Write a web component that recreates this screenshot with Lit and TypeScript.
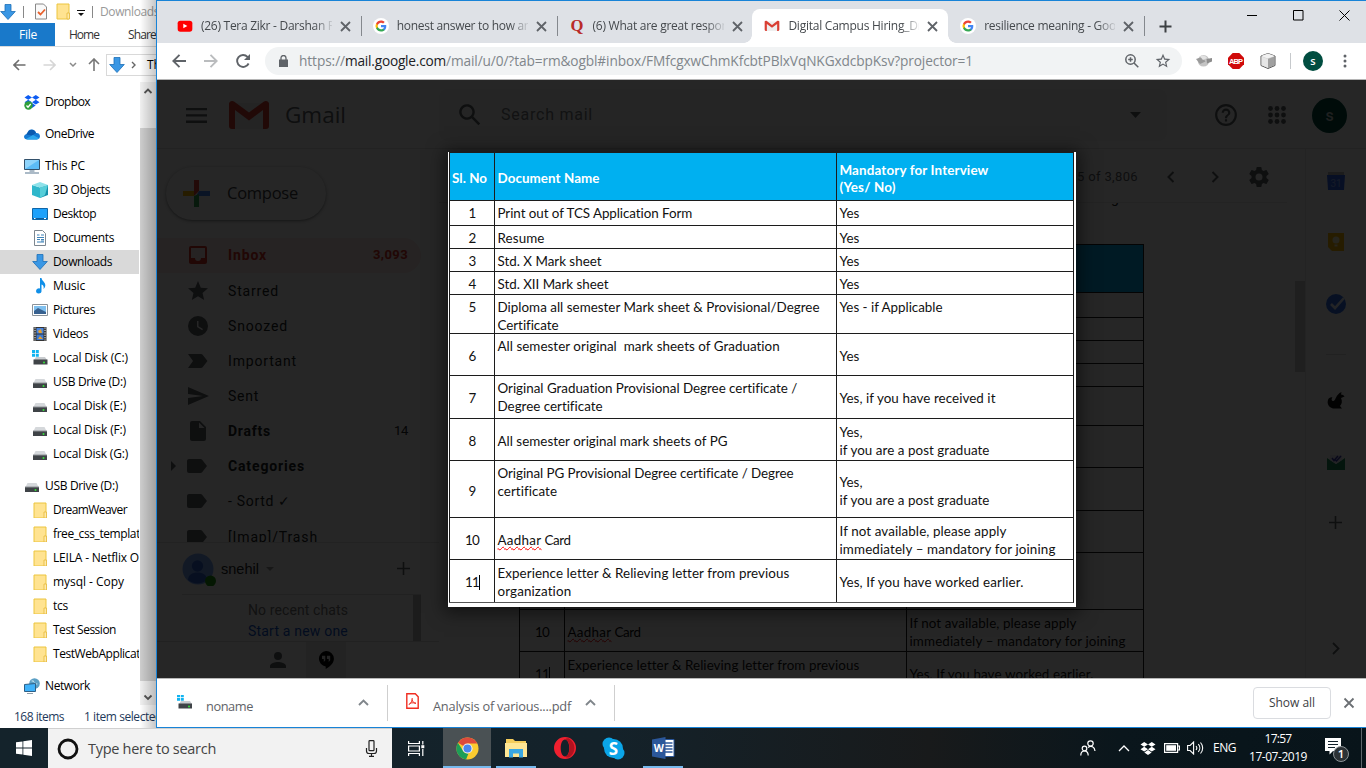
import { LitElement, html, svg, css, nothing } from "lit";
import { customElement, property, query } from "lit/decorators.js";

/** A run of text whose tracking is computed so that it fills a given width. */
@customElement("fit-text")
class FitText extends LitElement {
  @property({ type: Number }) w = 0;
  @property() text = "";
  @query("span") span!: HTMLSpanElement;
  static styles = css`
    :host { display: inline-block; white-space: pre; flex: none; }
    :host([wavy]) span { text-decoration: underline wavy #f00 1px; text-underline-offset: 1px; text-decoration-skip-ink: none; }
  `;
  render() {
    return html`<span>${this.text}</span>`;
  }
  firstUpdated() {
    const natural = this.span.getBoundingClientRect().width;
    this.span.style.letterSpacing = (this.w - natural) / this.text.length + "px";
    this.style.width = this.w + "px";
  }
}

const t = (text: string, w: number) => html`<fit-text .text=${text} .w=${w}></fit-text>`;

/** [first-line centre measured from the row top, lines as [text, width]] */
type Cell = [number, [string, number][]];
type Row = { h: number; cells: [Cell, Cell, Cell] };

const ROWS: Row[] = [
  { h: 48, cells: [[26, [["Sl. No", 35]]], [26, [["Document Name", 102]]], [17.5, [["Mandatory for Interview", 149], ["(Yes/ No)", 56]]]] },
  { h: 25, cells: [[13, [["1", 7]]], [13, [["Print out of TCS Application Form", 195]]], [13, [["Yes", 20]]]] },
  { h: 23, cells: [[12.5, [["2", 7]]], [12.5, [["Resume", 47]]], [12.5, [["Yes", 20]]]] },
  { h: 23, cells: [[12.5, [["3", 7]]], [12.5, [["Std. X Mark sheet", 104]]], [12.5, [["Yes", 20]]]] },
  { h: 23, cells: [[12.5, [["4", 7]]], [12.5, [["Std. XII Mark sheet", 111]]], [12.5, [["Yes", 20]]]] },
  { h: 39, cells: [[13, [["5", 7]]], [13, [["Diploma all semester Mark sheet & Provisional/Degree", 322], ["Certificate", 61]]], [13, [["Yes - if Applicable", 103]]]] },
  { h: 42, cells: [[23, [["6", 7]]], [13, [["All semester original  mark sheets of Graduation", 282.5]]], [23, [["Yes", 20]]]] },
  { h: 43, cells: [[23, [["7", 7]]], [13, [["Original Graduation Provisional Degree certificate /", 300], ["Degree certificate", 105]]], [23, [["Yes, if you have received it", 156]]]] },
  { h: 42, cells: [[23, [["8", 7]]], [23, [["All semester original mark sheets of PG", 230]]], [14, [["Yes,", 23], ["if you are a post graduate", 150]]]] },
  { h: 57, cells: [[30.5, [["9", 7]]], [13, [["Original PG Provisional Degree certificate / Degree", 296], ["certificate", 59.5]]], [22, [["Yes,", 23], ["if you are a post graduate", 150]]]] },
  { h: 42, cells: [[23, [["10", 14]]], [23, [["Aadhar Card", 73]]], [14, [["If not available, please apply", 167], ["immediately – mandatory for joining", 216]]]] },
  { h: 43, cells: [[22.5, [["11", 14]]], [14, [["Experience letter & Relieving letter from previous", 291], ["organization", 74]]], [22.5, [["Yes, If you have worked earlier.", 184]]]] },
];

@customElement("doc-table")
class DocTable extends LitElement {
  static styles = css`
    :host { display: block; width: 628px; height: 455px; background: #fff; color: #111; font: 13.4px/17.7px Lato, sans-serif; box-sizing: border-box; padding-left: 1px; }
    .row { display: grid; grid-template-columns: 45px 342px 237px; width: 625px; border-top: 1px solid #1c1c1c; border-right: 1px solid #1c1c1c; box-sizing: border-box; }
    .row:last-child { border-bottom: 1px solid #555; }
    .cell { border-left: 1px solid #1c1c1c; padding-left: 2.500px; box-sizing: border-box; }
    .cell:first-child { padding-left: 0; text-align: center; }
    .head { background: #00b0f0; color: #fff; font-weight: 700; }
    .head .cell:first-child { padding-right: 5px; }
    .line { display: block; white-space: nowrap; height: 17.700px; }
    .caret { display: inline-block; width: 1px; height: 15px; background: #000; vertical-align: -3px; margin-right: -1px; }
  `;
  private line([text, w]: [string, number]) {
    if (text === "Aadhar Card")
      return html`<span class="line"><fit-text wavy .text=${"Aadhar"} .w=${44}></fit-text>${t(" Card", 29)}</span>`;
    return html`<span class="line">${t(text, w)}${text === "11" ? html`<i class="caret"></i>` : nothing}</span>`;
  }
  render() {
    return ROWS.map(
      (r, i) => html`<div class="row ${i ? "" : "head"}" style="height:${i === 11 ? r.h + 1 : r.h}px">
        ${r.cells.map(([c, lines]) => html`<div class="cell" style="padding-top:${c - 9}px">${lines.map((l) => this.line(l))}</div>`)}
      </div>`
    );
  }
}

/* ---------- icons ---------- */
const icon = (w: number, h: number, vb: string, body: unknown, cls = "") =>
  html`<svg class="ic ${cls}" width=${w} height=${h} viewBox=${vb}>${body}</svg>`;

const arrowDown = svg`<path d="M5 0.5h6v7h4.3L8 15.5.7 7.500H5z" fill="#3a97e4" stroke="#1c6fb8" stroke-width=".8"/>`;
const folder = svg`<path d="M2 1h12v15H2z" fill="#ffe391" stroke="#ecc53f" stroke-width="1"/><path d="M12 10h2.500v6H12z" fill="#ffe9a8" stroke="#e6b93a" stroke-width=".8"/>`;
const drive = svg`<path d="M3.500 5h9l2 4h-13z" fill="#d5d8db"/><path d="M1 9h14v5H1z" fill="#3f4347"/><path d="M1 8.500h14v1H1z" fill="#8e9296"/><circle cx="11.500" cy="12" r="1" fill="#35e23a"/>`;
const winDrive = svg`<path d="M0 0h3v3H0zM3.800 0h3v3h-3zM0 3.800h3v3H0zM3.800 3.800h3v3h-3z" fill="#11b4f1"/><path d="M4 7h9l2 3H2z" fill="#c9cccf"/><path d="M1.500 9.500h14v5h-14z" fill="#3f4347"/><circle cx="12" cy="12.500" r="1" fill="#35e23a"/>`;
const dbx = (c: string) => svg`<path fill=${c} d="M4.200 1 .5 3.400l3.700 2.400L8 3.400zM11.800 1 8 3.400l3.800 2.400 3.700-2.400zM.5 8.200l3.700 2.400L8 8.200 4.200 5.800zM11.800 5.800 8 8.200l3.800 2.400 3.700-2.400zM4.300 11.500 8 13.900l3.700-2.400L8 9.100z"/>`;
const gees = svg`<circle cx="12" cy="12" r="12" fill="#fff"/><g transform="translate(3 3) scale(.75)"><path fill="#4285F4" d="M22.560 12.250c0-.78-.07-1.530-.2-2.250H12v4.260h5.920a5.060 5.060 0 0 1-2.200 3.320v2.770h3.570c2.080-1.920 3.270-4.740 3.270-8.100z"/><path fill="#34A853" d="M12 23c2.970 0 5.460-.98 7.280-2.660l-3.570-2.770c-.98.66-2.230 1.060-3.710 1.060-2.860 0-5.290-1.930-6.160-4.530H2.180v2.840A11 11 0 0 0 12 23z"/><path fill="#FBBC05" d="M5.840 14.090a6.600 6.600 0 0 1 0-4.180V7.070H2.180a11 11 0 0 0 0 9.860z"/><path fill="#EA4335" d="M12 5.380c1.620 0 3.060.56 4.210 1.640l3.150-3.150C17.450 2.090 14.970 1 12 1A11 11 0 0 0 2.180 7.070l3.660 2.840C6.710 7.310 9.140 5.380 12 5.380z"/></g>`;
const gmailM = svg`<path d="M3 2h34v26H3z" fill="#eee"/><path d="M0 4.500V25a3 3 0 0 0 3 3h3V9l14 10.500L34 9v19h3a3 3 0 0 0 3-3V4.500A3.500 3.500 0 0 0 36.500 0L35 .5 20 11.500 5 .5 3.500 0A3.500 3.500 0 0 0 0 4.500z" fill="#d93f33"/>`;
const cross = (c: string, s = 1.8) => svg`<path d="M1.500 1.500l9 9M10.500 1.500l-9 9" stroke=${c} stroke-width=${s} fill="none"/>`;

const NAV: ({ n: string; w: number; i: unknown; top?: boolean; gap?: boolean; sel?: boolean })[] = [
  { n: "Dropbox", w: 45, top: true, i: svg`${dbx("#0d5cf2")}<circle cx="4.500" cy="11.500" r="4.200" fill="#2f9e3b"/><path d="M2.500 11.500l1.500 1.700 2.700-3.200" stroke="#fff" stroke-width="1.300" fill="none"/>` },
  { n: "OneDrive", w: 49, top: true, gap: true, i: svg`<path d="M3.500 8a4 4 0 0 1 4-4.500c2.500 0 4 1.500 4.500 3.500 2.300-.2 4 1 4 3.300 0 2-1.400 3.200-3.400 3.200H3.500C1.300 13.500 0 12.200 0 10.700S1.500 8 3.500 8z" fill="#1479d2"/><path d="M5 4.800C8 2.500 11 4 12 7l-4 2.500L2 8.500z" fill="#0a59ae"/><path d="M2 13l7-4 6.500 3.500-2.900 1H3.500z" fill="#2ba6ec"/>` },
  { n: "This PC", w: 40, top: true, gap: true, i: svg`<path d="M.5 1.500h15v10H.5z" fill="#5cbcf7" stroke="#33516b"/><path d="M1 2h14l-14 9z" fill="#8fd4fb"/><path d="M5.500 13h5M1 15h14" stroke="#90a4b5" stroke-width="1.300"/>` },
  { n: "3D Objects", w: 57, i: svg`<path d="M0 3l8 2.500V16l-8-3z" fill="#2fb7cb"/><path d="M16 3L8 5.500V16l8-3z" fill="#1590ab"/><path d="M8 0l8 3-8 2.500L0 3z" fill="#8ee2ea"/><path d="M8 5.500L16 3l-3 10-5 3z" fill="#56ced9"/>` },
  { n: "Desktop", w: 43, i: svg`<path d="M.5 2.500h15v11H.5z" fill="#1da1fb" stroke="#0f66a8"/><path d="M1 12.500h14" stroke="#0c5c9c"/><path d="M2 12.500h1.500M12 12.500h2" stroke="#fff"/>` },
  { n: "Documents", w: 61, i: svg`<path d="M2.500.5h8l3 3v12h-11z" fill="#fff" stroke="#7d8790"/><path d="M5 5h2.500M9 5h3M5 7.500h7M5 9.500h3M9 9.500h3M5 12h7M9 11h3" stroke="#3d82b8"/>` },
  { n: "Downloads", w: 59, sel: true, i: arrowDown },
  { n: "Music", w: 32, i: svg`<path d="M8 0h1.500c.3 3 4 4 3.800 7.500-.1 1.400-.8 2.500-1.800 3.500.7-2.800-.3-4-2-4.500v5.700A3 3 0 0 1 6.500 15.500 2.500 2.500 0 0 1 4 13.200 3 3 0 0 1 8 10.500z" fill="#0f8fe8"/>` },
  { n: "Pictures", w: 42, i: svg`<path d="M.5 2.500h15v11H.5z" fill="#fff" stroke="#8a9299"/><path d="M2 4h12v8H2z" fill="#7fc0ef"/><path d="M2 9l4-3 8 4v2H2z" fill="#38618f"/>` },
  { n: "Videos", w: 35, i: svg`<path d="M1.500 1h13v14h-13z" fill="#333"/><path d="M4.500 2h7v5.500h-7z" fill="#4b86e0"/><path d="M4.500 8.500h7V14h-7z" fill="#3f79cf"/><path d="M6 5l3-2 1 4H7zM6 13l2-3 3 3z" fill="#e5a02c"/><path d="M3 1.500v13M13 1.500v13" stroke="#fff" stroke-dasharray="1.200 1.200"/>` },
  { n: "Local Disk (C:)", w: 75, i: winDrive },
  { n: "USB Drive (D:)", w: 73, i: drive },
  { n: "Local Disk (E:)", w: 73, i: drive },
  { n: "Local Disk (F:)", w: 73, i: drive },
  { n: "Local Disk (G:)", w: 75, i: drive },
  { n: "USB Drive (D:)", w: 73, top: true, gap: true, i: drive },
  { n: "DreamWeaver", w: 74, i: folder },
  { n: "free_css_templat", w: 87, i: folder },
  { n: "LEILA - Netflix O", w: 86, i: folder },
  { n: "mysql - Copy", w: 71, i: folder },
  { n: "tcs", w: 15, i: folder },
  { n: "Test Session", w: 63, i: folder },
  { n: "TestWebApplicat", w: 87, i: folder },
  { n: "Network", w: 45, top: true, gap: true, i: svg`<circle cx="10.500" cy="5.500" r="5.300" fill="#5b9fc4"/><path d="M7 3c2-2 4 0 3 2s2 2 4 1" fill="#b9dcec"/><path d="M.5 6.500l11 -1v8l-11 0z" fill="#3fb2fa" stroke="#2d5f86"/><path d="M3 15.500h6" stroke="#8f9ca6"/>` },
];

@customElement("file-explorer")
class FileExplorer extends LitElement {
  static styles = css`
    :host { display: flex; flex-direction: column; width: 156px; height: 728px; background: #fff; overflow: hidden; font: 12px/16px "Open Sans", "Noto Sans", sans-serif; color: #000; position: relative; }
    .ic { display: block; flex: none; }
    .title { display: flex; align-items: center; height: 23px; color: #999; white-space: nowrap; }
    .q1 { margin-right: 7px; }
    .bar { width: 1px; height: 12px; background: #888; flex: none; }
    .q2 { margin: 0 6px 0 9px; }
    .q3 { margin-right: 6px; }
    .q4 { margin: 3px 7px 0 0; }
    .name { margin-left: 7px; }
    .tabs { display: flex; height: 23px; line-height: 24px; border-bottom: 1px solid #dadbdc; color: #333; }
    .file { width: 56px; padding-left: 19px; box-sizing: border-box; background: #1979ca; color: #fff; margin-right: 14px; }
    .share { margin-left: 29px; }
    .nav { display: flex; align-items: center; height: 35px; white-space: nowrap; }
    .nav .a { margin-left: 13px; margin-right: 17px; }
    .nav .c { margin: 0 11px 0 13px; }
    .addr { margin-left: 6px; width: 60px; height: 20px; border: 1px solid #d9d9d9; display: flex; align-items: center; padding-left: 2px; gap: 6px; }
    .addr .p { margin-left: 5px; }
    .mid { display: flex; height: 623px; }
    .tree { width: 139px; padding-top: 8px; overflow: hidden; }
    .item { display: flex; align-items: center; height: 24px; gap: 5px; padding-left: 32px; white-space: nowrap; }
    .top { padding-left: 24px; }
    .gap { margin-top: 8px; }
    .sel { background: #d9d9d9; }
    .scroll { width: 16px; margin-left: 1px; background: #f0f0f0; display: flex; flex-direction: column; align-items: center; }
    .thumb { align-self: stretch; height: 553px; background: #cdcdcd; }
    .up { margin: 6px 0 33px; }
    .down { margin-top: 13px; }
    .status { display: flex; height: 22px; line-height: 23px; padding-left: 14px; color: #1e395b; white-space: nowrap; }
    .status .s { width: 1px; height: 15px; margin: 3px 10px 0; background: #e0e6f0; }
    .shade { position: absolute; right: 0; top: 0; bottom: 0; width: 16px; background: linear-gradient(90deg, rgba(0,0,0,0), rgba(0,0,0,.22)); }
  `;
  render() {
    return html`
      <div class="title">
        ${icon(16, 16, "0 0 16 16", arrowDown, "q1")}<i class="bar"></i>
        ${icon(16, 17, "0 0 16 17", svg`<path d="M2.500 1h8l3 3v12h-11z" fill="#f9f9f9" stroke="#888"/><path d="M5 9l2.500 2.500L12 6.500" fill="none" stroke="#e8602c" stroke-width="1.800"/>`, "q2")}
        ${icon(16, 17, "0 0 16 17", folder, "q3")}
        ${icon(8, 8, "0 0 8 8", svg`<path d="M0 1.500h8" stroke="#111"/><path d="M1 4h6L4 7z" fill="#111"/>`, "q4")}<i class="bar"></i>
        <span class="name">${t("Downloads", 59)}</span>
      </div>
      <div class="tabs"><span class="file">${t("File", 18)}</span>${t("Home", 30)}<span class="share">${t("Share", 28)}</span></div>
      <div class="nav">
        ${icon(13, 12, "0 0 13 12", svg`<path d="M6 1L1 6l5 5M1 6h11.500" fill="none" stroke="#6e6e6e" stroke-width="1.600"/>`, "a")}
        ${icon(13, 12, "0 0 13 12", svg`<path d="M7 1l5 5-5 5M12 6H.5" fill="none" stroke="#d6d6d6" stroke-width="1.600"/>`)}
        ${icon(8, 6, "0 0 8 6", svg`<path d="M1 1l3 3 3-3" fill="none" stroke="#8a8a8a" stroke-width="1.500"/>`, "c")}
        ${icon(12, 13, "0 0 12 13", svg`<path d="M1 6l5-5 5 5M6 1v12" fill="none" stroke="#777" stroke-width="1.600"/>`)}
        <div class="addr">${icon(16, 16, "0 0 16 16", arrowDown)}${icon(5, 8, "0 0 5 8", svg`<path d="M1 1l3 3-3 3" fill="none" stroke="#666" stroke-width="1.400"/>`)}<span class="p">${t("This PC", 40)}</span></div>
      </div>
      <div class="mid">
        <div class="tree">
          ${NAV.map((x) => html`<div class="item ${x.top ? "top" : ""} ${x.gap ? "gap" : ""} ${x.sel ? "sel" : ""}">${icon(16, 16, "0 0 16 16", x.i)}${t(x.n, x.w)}</div>`)}
        </div>
        <div class="scroll">
          ${icon(10, 7, "0 0 10 7", svg`<path d="M1.500 5L5 1.500 8.500 5" fill="none" stroke="#555" stroke-width="1.800"/>`, "up")}
          <div class="thumb"></div>
          ${icon(10, 7, "0 0 10 7", svg`<path d="M1.500 1.500L5 5l3.500-3.500" fill="none" stroke="#555" stroke-width="1.800"/>`, "down")}
        </div>
      </div>
      <div class="status">${t("168 items", 50)}<i class="s"></i>${t("1 item selected", 78)}</div>
      <div class="shade"></div>`;
  }
}

/* ---------- gmail page ---------- */
const label = svg`<path d="M3 5h11.500c.7 0 1.200.3 1.600.8L21 12l-4.900 6.200c-.4.500-.9.800-1.600.8H3a2 2 0 0 1-2-2V7c0-1.100.9-2 2-2z"/>`;
const FOLDERS: { n: string; w: number; i: unknown; b?: boolean; count?: string; cw?: number; sel?: boolean; ex?: boolean }[] = [
  { n: "Inbox", w: 39, b: true, sel: true, count: "3,093", cw: 35, i: svg`<path fill-rule="evenodd" d="M19 3H5a2 2 0 0 0-2 2v14c0 1.100.9 2 2 2h14a2 2 0 0 0 2-2V5a2 2 0 0 0-2-2zm0 12h-4a3 3 0 0 1-6 0H5V5h14z"/>` },
  { n: "Starred", w: 51, i: svg`<path d="M12 17.270 18.180 21l-1.640-7.030L22 9.240l-7.190-.61L12 2 9.190 8.630 2 9.240l5.460 4.730L5.820 21z"/>` },
  { n: "Snoozed", w: 60, i: svg`<path fill-rule="evenodd" d="M12 2a10 10 0 1 0 0 20 10 10 0 0 0 0-20zm4.200 14.200L11 13V7h1.500v5.200l4.500 2.700z"/>` },
  { n: "Important", w: 69, i: svg`<path d="M2 19l5-7-5-7h13c.7 0 1.300.3 1.600.8L21.500 12l-4.900 6.200c-.4.500-1 .8-1.600.8z"/>` },
  { n: "Sent", w: 31, i: svg`<path d="M2 21L23 12 2 3v7l15 2-15 2z"/>` },
  { n: "Drafts", w: 43, b: true, count: "14", cw: 14, i: svg`<path fill-rule="evenodd" d="M14 2H6a2 2 0 0 0-2 2v16c0 1.100.9 2 2 2h12a2 2 0 0 0 2-2V8zm-1 7V3.500L18.500 9z"/>` },
  { n: "Categories", w: 77, b: true, ex: true, i: label },
  { n: "- Sortd ✓", w: 63, i: label },
  { n: "[Imap]/Trash", w: 90, i: label },
];

@customElement("gmail-page")
class GmailPage extends LitElement {
  static styles = css`
    :host { display: block; position: relative; width: 1209px; height: 598px; overflow: hidden; background: #fff; font: 14px/20px Roboto, sans-serif; color: #202124; }
    .ic { display: block; flex: none; fill: #5f6368; }
    .head { display: flex; align-items: center; height: 69px; padding-top: 2px; box-sizing: border-box; border-bottom: 1px solid #e4e4e4; }
    .burger { margin: 0 22px 0 29px; }
    .gm { font: 22.5px/30px "Open Sans", sans-serif; color: #5f6368; margin: 0 93px 0 16px; }
    .search { display: flex; align-items: center; width: 728px; height: 52px; background: #f6f7f7; border-radius: 8px; font-size: 16px; color: #777b80; }
    .search .m { margin: 0 19px 0 19px; }
    .search .v { margin-left: auto; margin-right: 26px; }
    .help { margin: 0 30px 0 47px; }
    .av { width: 35px; height: 35px; line-height: 35px; text-align: center; border-radius: 50%; background: #004d40; color: #cfd8d5; margin-left: 26px; font-weight: 500; font-size: 16px; }
    .body { display: flex; height: 529px; }
    .left { width: 282px; flex: none; display: flex; flex-direction: column; }
    .compose { display: flex; align-items: center; width: 160px; height: 53px; margin: 18px 0 18px 9px; border-radius: 27px; box-shadow: 0 1px 2px rgba(60,64,67,.4), 0 1px 4px 1px rgba(60,64,67,.2); font: 500 16.500px/20px "Open Sans", sans-serif; color: #3c4043; box-sizing: border-box; padding-left: 17px; gap: 17px; }
    .folders { height: 305px; overflow: hidden; }
    .f { display: flex; align-items: center; height: 35.150px; width: 264px; box-sizing: border-box; padding: 0 13px 0 14px; border-radius: 0 18px 18px 0; }
    .f .ic { margin-right: 19px; }
    .f .e { width: 6px; margin-right: 10px; }
    .f .c { margin-left: auto; font-size: 13px; }
    .b { font-weight: 700; }
    .b .c { font-weight: 400; }
    .sel { background: #fce8e6; color: #d93025; }
    .sel .ic { fill: #d93025; }
    .sel .c { font-weight: 700; }
    .chat { border-top: 1px solid #e4e4e4; height: 51px; display: flex; align-items: center; padding: 0 29px 0 25px; color: #202124; font-family: "Liberation Sans", sans-serif; font-size: 14.500px; }
    .chat .n { margin: 0 7px 0 5px; }
    .chat .p { margin-left: auto; }
    .recent { margin-left: 25px; width: 239px; height: 46px; display: flex; border-top: 1px solid #ddd; color: #777; }
    .recent .tx { flex: 1; padding: 5px 0 0 66px; line-height: 21px; }
    .recent .bar { width: 8px; background: #bbb; }
    .blue { color: #15c; }
    .foot { border-top: 1px solid #ddd; flex: 1; display: flex; padding-left: 101px; align-items: center; }
    .hang { background: #ececec; width: 40px; height: 36px; display: flex; align-items: center; justify-content: center; }
    .foot .u { margin: 0 20px 0 12px; }
    .main { width: 866px; flex: none; display: flex; flex-direction: column; }
    .tools { display: flex; align-items: center; justify-content: flex-end; height: 54px; border-bottom: 1px solid #e6e6e6; margin-right: 18px; box-sizing: border-box; padding: 2px 18px 0 0; color: #5f6368; font-size: 13px; }
    .tools .l { margin: 0 36px 0 29px; }
    .tools .g { margin-left: 30px; }
    .scrollrow { display: flex; flex: 1; overflow: hidden; }
    .msg { flex: 1; padding-left: 79px; }
    .tail { height: 41px; line-height: 20px; padding-left: 593px; overflow: hidden; }
    .tail span { display: block; margin-top: -15px; }
    .thumb { width: 10px; height: 91px; margin-top: 78px; background: #cdcdcd; }
    .side { width: 60px; border-left: 1px solid #e8e8e8; display: flex; flex-direction: column; align-items: center; padding: 22px 0 23px; box-sizing: border-box; }
    .side .ic { margin-bottom: 41px; }
    .side hr { width: 20px; border: 0; border-top: 1px solid #ddd; margin: -2px 0 35px; }
    .side .env { margin-bottom: 45px; }
    .side .last { margin: auto 0 0; }
    .veil { position: absolute; inset: 0; background: rgba(0,0,0,.85); }
    .modal { position: absolute; left: 291px; top: 72px; box-shadow: 0 2px 16px 4px rgba(0,0,0,.5); }
  `;
  render() {
    return html`
      <div class="head">
        ${icon(21, 15, "0 0 21 15", svg`<path d="M0 0h21v2.300H0zM0 6.300h21v2.300H0zM0 12.600h21v2.300H0z"/>`, "burger")}
        ${icon(40, 28, "0 0 40 28", gmailM)}
        <span class="gm">${t("Gmail", 61)}</span>
        <div class="search">
          ${icon(24, 24, "2 2 20 20", svg`<path d="M20.490 19l-5.730-5.730a6.500 6.500 0 1 0-1.490 1.490L19 20.490zM5 9.500a4.500 4.500 0 1 1 9 0 4.500 4.500 0 0 1-9 0z"/>`, "m")}
          ${t("Search mail", 92)}
          ${icon(11, 6, "0 0 11 6", svg`<path d="M0 0h11L5.500 6z"/>`, "v")}
        </div>
        ${icon(24, 24, "1 1 22 22", svg`<path d="M11 18h2v-2h-2zm1-16a10 10 0 1 0 0 20 10 10 0 0 0 0-20zm0 18a8 8 0 1 1 0-16 8 8 0 0 1 0 16zm0-14a4 4 0 0 0-4 4h2a2 2 0 1 1 4 0c0 2-3 1.750-3 5h2c0-2.250 3-2.500 3-5a4 4 0 0 0-4-4z"/>`, "help")}
        ${icon(18, 18, "0 0 18 18", svg`${[2.5, 9, 15.5].map((x) => [2.5, 9, 15.5].map((y) => svg`<circle cx=${x} cy=${y} r="2.400"/>`))}`)}
        <span class="av">s</span>
      </div>
      <div class="body">
        <div class="left">
          <div class="compose">
            ${icon(27, 27, "0 0 27 27", svg`<path d="M11 0h5v11l-5 5z" fill="#ea4335"/><path d="M0 11h11v5H0z" fill="#fbbc04"/><path d="M16 11h11v5H13z" fill="#4285f4"/><path d="M11 16l5-2v13h-5z" fill="#34a853"/>`)}
            ${t("Compose", 71)}
          </div>
          <div class="folders">
            ${FOLDERS.map((f) => html`<div class="f ${f.b ? "b" : ""} ${f.sel ? "sel" : ""}">
              <span class="e">${f.ex ? icon(5, 10, "0 0 5 10", svg`<path d="M0 0l5 5-5 5z"/>`) : nothing}</span>
              ${icon(22, 22, "1 1 22 22", f.i)}${t(f.n, f.w)}
              ${f.count ? html`<span class="c">${t(f.count, f.cw!)}</span>` : nothing}
            </div>`)}
          </div>
          <div class="chat">
            ${icon(34, 34, "0 0 34 34", svg`<circle cx="16" cy="17" r="15.500" fill="#7baaf7"/><circle cx="15.500" cy="14" r="5.700" fill="#3367d6"/><path d="M6 28c0-5 4-7.500 9.500-7.500S25 23 25 28a15 15 0 0 1-19 0z" fill="#3367d6"/><circle cx="28.500" cy="29" r="5.500" fill="#1f9b0e"/>`)}
            <span class="n">${t("snehil", 38)}</span>
            ${icon(8, 4, "0 0 8 4", svg`<path d="M0 0h8L4 4z" fill="#999"/>`)}
            ${icon(13, 13, "0 0 13 13", svg`<path d="M5.700 0h1.600v13H5.700zM0 5.700h13v1.600H0z"/>`, "p")}
          </div>
          <div class="recent"><div class="tx"><div>${t("No recent chats", 100)}</div><div class="blue">${t("Start a new one", 100)}</div></div><div class="bar"></div></div>
          <div class="foot">
            ${icon(16, 16, "4 4 16 16", svg`<path d="M12 12a4 4 0 1 0 0-8 4 4 0 0 0 0 8zm0 2c-2.670 0-8 1.340-8 4v2h16v-2c0-2.660-5.330-4-8-4z"/>`, "u")}
            <span class="hang">${icon(16, 18, "0 0 16 18", svg`<path fill-rule="evenodd" fill="#000" d="M8 0a7.800 7.800 0 0 0-.3 15.500V18c4.500-2.200 8.200-6 8.200-10.200A7.800 7.800 0 0 0 8 0zM4 4.800h3.300v4.500L5.800 11V8H4zM8.900 4.800h3.300v4.500L10.700 11V8H8.900z"/>`)}</span>
          </div>
        </div>
        <div class="main">
          <div class="tools">
            ${t("5 of 3,806", 61)}
            ${icon(8, 12, "0 0 8 12", svg`<path d="M6.500 1l-5 5 5 5" fill="none" stroke="#5f6368" stroke-width="2"/>`, "l")}
            ${icon(8, 12, "0 0 8 12", svg`<path d="M1.500 1l5 5-5 5" fill="none" stroke="#5f6368" stroke-width="2"/>`)}
            ${icon(20, 20, "2 2 20 20", svg`<path fill-rule="evenodd" d="M19.430 12.980a8 8 0 0 0 0-1.960l2.110-1.650a.5.5 0 0 0 .12-.64l-2-3.460a.5.5 0 0 0-.61-.22l-2.490 1a7.300 7.300 0 0 0-1.690-.98l-.38-2.650A.5.500 0 0 0 14 2h-4a.5.500 0 0 0-.49.420l-.38 2.650c-.61.250-1.170.590-1.690.980l-2.490-1a.5.500 0 0 0-.61.220l-2 3.460a.5.500 0 0 0 .12.640l2.110 1.650a8 8 0 0 0 0 1.960l-2.110 1.650a.5.500 0 0 0-.12.640l2 3.460c.12.220.390.300.610.220l2.490-1c.52.400 1.080.730 1.690.980l.38 2.650c.03.240.240.420.490.420h4c.25 0 .46-.18.49-.42l.38-2.650c.61-.25 1.170-.59 1.690-.98l2.490 1c.22.080.490 0 .61-.22l2-3.460a.5.500 0 0 0-.12-.64zM12 15.500a3.500 3.500 0 1 1 0-7 3.500 3.500 0 0 1 0 7z"/>`, "g")}
          </div>
          <div class="scrollrow">
            <div class="msg"><div class="tail"><span>g</span></div><doc-table></doc-table></div>
            <div class="thumb"></div>
          </div>
        </div>
        <div class="side">
          ${icon(18, 20, "0 0 18 20", svg`<path d="M1 1h16v5H1z" fill="#bbb"/><path d="M0 4h18l-1 15H1z" fill="#3367f0"/><text x="9" y="15.500" font-size="10" text-anchor="middle" fill="#8fb0ff">31</text>`)}
          ${icon(18, 20, "0 0 18 20", svg`<path d="M1 1h16v18H5l-4-4z" fill="#fbbc04"/><circle cx="9" cy="8" r="3.500" fill="#fff3c8"/><path d="M7.500 12.500h3v2h-3z" fill="#fff3c8"/>`)}
          ${icon(22, 22, "0 0 22 22", svg`<circle cx="11" cy="11" r="10" fill="#2f6fe8"/><path d="M6 11l4 4 9-10" fill="none" stroke="#e8f0ff" stroke-width="2.600"/>`)}
          <hr>
          ${icon(18, 20, "0 0 18 20", svg`<path d="M14.500 2l-.5 2.500c2 .3 3 1 3.500 2l-3.500 1.500c1.500 3 1 6-1 8l2 2.500H6C1 17 0 13 1 10c.7-2 2.500-3 4.500-2.500C4 9 4.500 11 6.500 11 9 10.500 8.500 4.500 14.500 2z" fill="#111"/>`)}
          ${icon(20, 20, "0 0 20 20", svg`<path d="M1 7l9 6 9-6v12H1z" fill="#1e8e5a"/><path d="M4 4h12v5l-6 4-6-4z" fill="#e8e8f4"/><path d="M6 7l2 2.500L12 5M9.500 9l1 1L15 5" stroke="#3b3bb0" fill="none" stroke-width="1.500"/>`, "env")}
          ${icon(13, 13, "0 0 13 13", svg`<path d="M5.700 0h1.600v13H5.700zM0 5.700h13v1.600H0z"/>`)}
          ${icon(8, 13, "0 0 8 13", svg`<path d="M1 1l5.500 5.500L1 12" fill="none" stroke="#5f6368" stroke-width="1.800"/>`, "last")}
        </div>
      </div>
      <div class="veil"></div>
      <doc-table class="modal"></doc-table>`;
  }
}

/* ---------- browser window ---------- */
const TABS = [
  { n: "(26) Tera Zikr - Darshan R", w: 134, i: svg`<rect x="1" y="4" width="22" height="16.500" rx="4" fill="#f00"/><path d="M9.500 8.500v7l6-3.500z" fill="#fff"/>` },
  { n: "honest answer to how are", w: 138, i: gees },
  { n: "(6) What are great respon", w: 136, i: svg`<text x="12" y="20" text-anchor="middle" font-family="Liberation Serif" font-weight="700" font-size="25" fill="#b92b27">Q</text>` },
  { n: "Digital Campus Hiring_Dr", w: 134, on: true, i: svg`<g transform="translate(1 4) scale(.55)">${gmailM}</g>` },
  { n: "resilience meaning - Goog", w: 138, i: gees },
];

@customElement("browser-window")
class BrowserWindow extends LitElement {
  static styles = css`
    :host { display: block; width: 1210px; height: 728px; box-sizing: border-box; border: 1px solid #1883d7; border-right: 0; background: #fff; font: 12px/16px "Open Sans", "Noto Sans", sans-serif; color: #3c4043; overflow: hidden; }
    .ic { display: block; flex: none; }
    .strip { display: flex; height: 42px; padding: 8px 0 0 8px; box-sizing: border-box; background: #dee1e6; }
    .tab { display: flex; align-items: center; width: 195.800px; height: 34px; padding-left: 12px; box-sizing: border-box; gap: 8px; position: relative; color: #45494d; }
    .tab .tt { width: 131px; overflow: hidden; white-space: nowrap; -webkit-mask: linear-gradient(90deg, #000 86%, transparent 102%); mask: linear-gradient(90deg, #000 86%, transparent 102%); }
    .tab.sep::after { content: ""; position: absolute; right: -1px; top: 7px; width: 1px; height: 20px; background: #84888d; }
    .on { background: #fff; border-radius: 8px 8px 0 0; }
    .on::before, .on::after { content: ""; position: absolute; bottom: 0; width: 8px; height: 8px; }
    .on::before { left: -8px; background: radial-gradient(circle at 0 0, transparent 7.5px, #fff 8px); }
    .on::after { right: -8px; background: radial-gradient(circle at 100% 0, transparent 7.5px, #fff 8px); }
    .plus { margin: 11px 0 0 15px; }
    .win { margin: 1px 16px 0 auto; display: flex; gap: 35px; }
    .bar { display: flex; align-items: center; height: 37px; border-bottom: 1px solid #b5b5b5; padding-left: 15px; box-sizing: border-box; }
    .bar .r { margin-right: 18px; }
    .omni { display: flex; align-items: center; width: 917px; height: 28px; border-radius: 14px; background: #f1f3f4; font-size: 13.700px; color: #80868b; margin-left: -4px; box-sizing: border-box; padding: 0 11px 0 14px; }
    .omni .lock { margin-right: 11px; }
    .host { color: #202124; }
    .omni .z { margin: 0 16px 0 auto; }
    .ext { display: flex; gap: 16px; margin-left: 14px; align-items: center; }
    .vr { width: 1px; height: 16px; background: #c6c9cc; margin: 0 12px 0 14px; }
    .av { width: 20px; height: 20px; line-height: 19px; border-radius: 50%; background: #004d40; color: #fff; text-align: center; font-weight: 600; margin-right: 20px; font-size: 11px; }
    .dl { display: flex; align-items: center; height: 49px; box-sizing: border-box; border-top: 1px solid #b8b8b8; font-size: 12.800px; color: #5f6368; }
    .dl .n1 { margin-left: 14px; width: 152px; padding-top: 5px; }
    .dl .s { width: 1px; height: 36px; background: #cfcfcf; }
    .dl .s1 { margin: 0 18px; }
    .dl .n2 { margin: 0 14px 0 14px; padding-top: 5px; }
    .dl .s2 { margin-left: 18px; }
    .btn { margin-left: auto; width: 78px; height: 32px; line-height: 30px; border: 1px solid #dadce0; border-radius: 4px; box-sizing: border-box; text-align: center; margin-right: 12px; color: #3c4043; font-size: 12px; }
    .x { margin-right: 11px; }
  `;
  render() {
    const chev = svg`<path d="M1 6l4.500-4.500L10 6" fill="none" stroke="#80868b" stroke-width="1.900"/>`;
    return html`
      <div class="strip">
        ${TABS.map((x, i) => html`<div class="tab ${x.on ? "on" : ""} ${i !== 2 && i !== 3 ? "sep" : ""}">${icon(16, 16, "0 0 24 24", x.i)}<span class="tt">${t(x.n, x.w)}</span>${icon(11, 11, "0.5 0.5 11 11", cross("#5f6368"))}</div>`)}
        ${icon(13, 13, "0 0 13 13", svg`<path d="M6.500 .5v12M.5 6.500h12" stroke="#3c4043" stroke-width="2"/>`, "plus")}
        <div class="win">
          ${icon(11, 11, "0 0 11 11", svg`<path d="M0 5.500h10" stroke="#000"/>`)}
          ${icon(11, 11, "0 0 11 11", svg`<path d="M.5.5h9.500v9.500H.5z" stroke="#000" fill="none"/>`)}
          ${icon(11, 11, "0 0 11 11", svg`<path d="M.5.5l10 10M10.500.5l-10 10" stroke="#000"/>`)}
        </div>
      </div>
      <div class="bar">
        ${icon(14, 14, "0 0 14 14", svg`<path d="M7.500 .8L1.300 7l6.200 6.200M1.300 7H14" fill="none" stroke="#5f6368" stroke-width="1.900"/>`, "r")}
        ${icon(14, 14, "0 0 14 14", svg`<path d="M6.500 .8L12.700 7l-6.200 6.200M12.700 7H0" fill="none" stroke="#babcbe" stroke-width="1.900"/>`, "r")}
        ${icon(15, 14, "0 0 15 14", svg`<path d="M12.600 9.500A6 6 0 1 1 11.500 2.800L13 4.300" fill="none" stroke="#5f6368" stroke-width="1.900"/><path d="M14 0v6H8z" fill="#5f6368"/>`, "r")}
        <div class="omni">
          ${icon(9, 12, "0 0 9 12", svg`<path d="M0 4.500h9V12H0z" fill="#5f6368"/><path d="M2 5V3a2.500 2.500 0 0 1 5 0v2" fill="none" stroke="#5f6368" stroke-width="1.300"/>`, "lock")}
          ${t("https://", 46)}<span class="host">${t("mail.google.com", 101)}</span>${t("/mail/u/0/?tab=rm&ogbl#inbox/FMfcgxwChmKfcbtPBlxVqNKGxdcbpKsv?projector=1", 527)}
          ${icon(14, 14, "0 0 14 14", svg`<circle cx="5.500" cy="5.500" r="4.700" fill="none" stroke="#5f6368" stroke-width="1.500"/><path d="M9 9l4.300 4.300M3.200 5.500h4.600M5.500 3.200v4.600" stroke="#5f6368" stroke-width="1.500"/>`, "z")}
          ${icon(16, 16, "1 1 22 22", svg`<path fill="#5f6368" d="M22 9.240l-7.190-.62L12 2 9.190 8.630 2 9.240l5.460 4.730L5.820 21 12 17.270 18.180 21l-1.630-7.030zM12 15.400l-3.760 2.270 1-4.280-3.320-2.880 4.380-.38L12 6.100l1.710 4.040 4.380.38-3.320 2.880 1 4.280z"/>`)}
        </div>
        <div class="ext">
          ${icon(16, 16, "0 0 16 16", svg`<circle cx="7.500" cy="7.800" r="5.800" fill="#c4c4c4"/><path d="M0 6l6-2 3.500 4.500L4 11z" fill="#9a9a9a"/><path d="M16 5l-5.500 1 .5 4.500 5-2z" fill="#8d8d8d"/><path d="M4 3.500c2-2 6-1 7 1.500L7 7z" fill="#e2e2e2"/>`)}
          ${icon(16, 16, "0 0 16 16", svg`<path d="M4.700 0h6.600L16 4.700v6.600L11.300 16H4.700L0 11.300V4.700z" fill="#d00a0a"/><text x="8" y="10.800" text-anchor="middle" font-family="Liberation Sans" font-weight="700" font-size="7.500" textLength="14" fill="#fff">ABP</text>`)}
          ${icon(16, 16, "0 0 16 16", svg`<path d="M1 3l7-2.500L15 3v9.500L8 15.500l-7-3z" fill="#c9c9c9" stroke="#555" stroke-width="1"/><path d="M1 3l6.500 2.500L15 3 8 .5z" fill="#f2f2f2"/><path d="M1.500 3.500L8 6v9l-6.500-2.800z" fill="#e6e6e6"/><path d="M8 6l6.500-2.500v8.800L8 15z" fill="#a0a0a0"/>`)}
        </div>
        <i class="vr"></i><span class="av">s</span>
        ${icon(4, 14, "0 0 4 14", svg`<circle cx="2" cy="2" r="1.500" fill="#5f6368"/><circle cx="2" cy="7" r="1.500" fill="#5f6368"/><circle cx="2" cy="12" r="1.500" fill="#5f6368"/>`)}
      </div>
      <gmail-page></gmail-page>
      <div class="dl">
        ${icon(35, 16, "-20 1 35 16", winDrive)}
        <span class="n1">${t("noname", 47)}</span>
        ${icon(11, 8, "0 0 11 8", chev)}
        <i class="s s1"></i>
        ${icon(13, 22, "0 0 13 22", svg`<path d="M.8 1.800h8.500l2.900 3v11.400H.8z" fill="#fff" stroke="#f02d20" stroke-width="1.400"/><path d="M3 12.500c2-1 3.500-4 3.200-6.500M6 7.500c.5 2.500 2 3.500 4 3.800M3 12.500c1-2 4-2 7-1.200" fill="none" stroke="#f02d20"/>`)}
        <span class="n2">${t("Analysis of various....pdf", 138)}</span>
        ${icon(11, 8, "0 0 11 8", chev)}
        <i class="s s2"></i>
        <span class="btn">${t("Show all", 46)}</span>
        ${icon(12, 12, "0 0 12 12", cross("#6b6f73"), "x")}
      </div>`;
  }
}

/* ---------- taskbar ---------- */
@customElement("task-bar")
class TaskBar extends LitElement {
  static styles = css`
    :host { display: flex; height: 40px; width: 1366px; background: linear-gradient(90deg, #14232b 0%, #14222a 45%, #181a1b 68%, #0a161c 82%, #08141a 100%); color: #fff; font: 12px/16px "Open Sans", "Noto Sans", sans-serif; box-sizing: border-box; }
    .ic { display: block; flex: none; }
    .start { width: 48px; display: flex; align-items: center; justify-content: center; }
    .search { width: 344px; background: #f2f2f2; display: flex; align-items: center; color: #444; font-size: 14.500px; padding: 0 14px 0 9px; box-sizing: border-box; gap: 9px; border-top: 1px solid #d0d0d0; }
    .search .ic:last-child { margin-left: auto; }
    .app { display: flex; align-items: center; justify-content: center; width: 48px; box-sizing: border-box; border: 0 solid #76b9ed; border-width: 2px 0; border-top-color: transparent; }
    .none { border-bottom-color: transparent; }
    .active { background: #4a5154; border-top-color: #4a5154; margin-left: 3px; }
    .short { width: 40px; }
    .e { margin: 0 5px; }
    .w { margin-left: 6px; }
    .tray { margin-left: auto; display: flex; align-items: center; }
    .clock { text-align: center; line-height: 18px; margin: 0 18px 0 13px; width: 58px; }
    .i1 { margin-right: 22px; } .i2 { margin-right: 10px; } .i3 { margin-right: 8px; } .i4 { margin-right: 7px; } .i5 { margin-right: 9px; }
    .end { width: 1px; height: 40px; background: #5d666b; margin: 0 4px 0 11px; }
  `;
  render() {
    return html`
      <div class="start">${icon(16, 16, "0 0 16 16", svg`<path fill="#fff" d="M0 2.300l6.500-.9v6.200H0zM7.300 1.300L16 0v7.600H7.300zM0 8.400h6.500v6.200L0 13.700zM7.300 8.400H16V16l-8.700-1.300z"/>`)}</div>
      <div class="search">
        ${icon(22, 22, "0 0 22 22", svg`<circle cx="11" cy="11" r="9" fill="none" stroke="#111" stroke-width="2.800"/>`)}
        ${t("Type here to search", 128)}
        ${icon(13, 17, "0 0 13 17", svg`<rect x="4" y=".7" width="5" height="10" rx=".8" fill="none" stroke="#222" stroke-width="1.200"/><path d="M1.500 8v3c0 1.700 1 2.500 2.500 2.500h5c1.500 0 2.500-.8 2.500-2.500V8M6.500 13.500V16M4 16.300h5" fill="none" stroke="#222" stroke-width="1.200"/>`)}
      </div>
      <div class="app none">${icon(17, 15, "0 0 17 15", svg`<path d="M.6 0v2.500h10.800V0M.6 15v-2.500h10.800V15M.6 5h10.800v5H.6zM14.800 0v3.500M14.800 8v7" fill="none" stroke="#fff" stroke-width="1.200"/><path d="M13.300 4.200h3v3h-3z" fill="#fff"/>`)}</div>
      <div class="app active">${icon(23, 23, "0 0 24 24", svg`<circle cx="12" cy="12" r="11.500" fill="#fbcb2f"/><path d="M12 12L2.200 6A11.500 11.500 0 0 1 22.300 6.800H12z" fill="#dd4a3c"/><path d="M2 6l5.500 8.600A5.300 5.300 0 0 0 13 17.100L10.500 23.400A11.500 11.500 0 0 1 2 6z" fill="#1d9e58"/><circle cx="12" cy="12" r="5.300" fill="#f4f4f4"/><circle cx="12" cy="12" r="4.200" fill="#4a86ee"/>`)}</div>
      <div class="app short e">${icon(22, 19, "0 0 22 19", svg`<path d="M1 0h7l2 2h11v16H1z" fill="#f5cd5b"/><path d="M0 4h22v14H0z" fill="#ffe694"/><path d="M4 10h14v8.500h-4v-4H8v4H4z" fill="#3aa7e2"/>`)}</div>
      <div class="app none">${icon(22, 22, "0 0 22 22", svg`<path fill-rule="evenodd" d="M11 0a11 11 0 1 0 0 22 11 11 0 0 0 0-22zm0 2.500c2.600 0 4.300 3.800 4.300 8.500s-1.700 8.500-4.300 8.500S6.700 15.700 6.700 11 8.400 2.500 11 2.500z" fill="#f0202f"/><path d="M15 1.500a11 11 0 0 1 0 19c-2 .3-3.500-.3-4-1 3-.5 4.500-4 4.500-8.500S14 3 11 2.500c1-1 2.500-1.500 4-1z" fill="#b0121f"/>`)}</div>
      <div class="app none">${icon(23, 23, "0 0 23 23", svg`<circle cx="11.500" cy="11.500" r="9.500" fill="#0ba5e8"/><circle cx="7" cy="7" r="6.500" fill="#0ba5e8"/><circle cx="16" cy="16" r="6.500" fill="#0ba5e8"/><text x="11.500" y="17.500" text-anchor="middle" font-family="Open Sans" font-weight="700" font-size="17" fill="#fff">S</text>`)}</div>
      <div class="app short w">${icon(23, 22, "0 0 23 22", svg`<path d="M11 2.500h11v17H11z" fill="#fff" stroke="#2b579a"/><path d="M13 6h7.500M13 9h7.500M13 12h7.500M13 15h7.500" stroke="#2b579a" stroke-width="1.500"/><path d="M0 2.500L13.500 0v22L0 19.500z" fill="#2b579a"/><text x="6.800" y="15" text-anchor="middle" font-family="Open Sans" font-weight="700" font-size="10.500" fill="#fff">W</text>`)}</div>
      <div class="tray">
        ${icon(16, 16, "0 0 16 16", svg`<g fill="none" stroke="#fff" stroke-width="1.200"><circle cx="10.500" cy="3.500" r="2.700"/><circle cx="4.500" cy="8.500" r="2.300"/><path d="M.8 15.500c0-3 1.700-4.500 3.700-4.500s3.700 1.500 3.700 4.500M8 7.500c3-2.500 6.700-.5 7 3.500"/></g>`, "i1")}
        ${icon(12, 8, "0 0 12 8", svg`<path d="M1 7l5-5 5 5" fill="none" stroke="#fff" stroke-width="1.300"/>`, "i2")}
        ${icon(16, 15, "0 0 16 15", dbx("#fff"), "i3")}
        ${icon(16, 10, "0 0 16 10", svg`<path d="M.6.600h13v8.800H.6zM14 3h1.500v4H14" fill="none" stroke="#fff" stroke-width="1.200"/><path d="M2.200 2.200h9.800v5.600H2.200z" fill="#fff"/>`, "i4")}
        ${icon(17, 14, "0 0 17 14", svg`<path d="M.6 4.500h2.500l3.500-3.500v12L3.100 9.500H.6zM9 5c1 1.200 1 2.800 0 4M11.300 3.200c2 2.200 2 5.400 0 7.600M13.500 1.500c2.900 3.200 2.900 7.800 0 11" fill="none" stroke="#fff" stroke-width="1.100"/>`, "i5")}
        ${t("ENG", 23)}
        <div class="clock"><div>${t("17:57", 27)}</div><div>${t("17-07-2019", 58)}</div></div>
        ${icon(25, 27, "0 0 25 27", svg`<path d="M0 3h16v13h-8l-3.500 3.500V16H0z" fill="#fff"/><path d="M3 6.500h10M3 9.500h10M3 12.500h7" stroke="#12212a" stroke-width="1.200"/><circle cx="16" cy="19" r="7.500" fill="#2c3236" stroke="#8d9498"/><text x="16" y="23" text-anchor="middle" font-family="Open Sans" font-weight="600" font-size="11.500" fill="#fff">1</text>`)}
        <i class="end"></i>
      </div>`;
  }
}

@customElement("app-root")
class AppRoot extends LitElement {
  static styles = css`
    :host { display: flex; flex-direction: column; width: 1366px; height: 768px; overflow: hidden; }
    .desk { display: flex; height: 728px; }
  `;
  render() {
    return html`<div class="desk"><file-explorer></file-explorer><browser-window></browser-window></div><task-bar></task-bar>`;
  }
}
